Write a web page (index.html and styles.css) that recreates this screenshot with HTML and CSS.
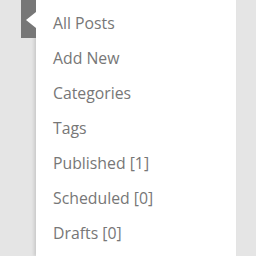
FILE: index.html
```html
<!DOCTYPE html>
<html>
<head>
<meta charset="utf-8">
<link rel="stylesheet" href="styles.css">
</head>
<body>
<div class="wrap">
  <div class="side">
    <div class="tab"><div class="notch"></div></div>
  </div>
  <ul class="menu">
    <li>All Posts</li>
    <li>Add New</li>
    <li>Categories</li>
    <li>Tags</li>
    <li>Published [1]</li>
    <li>Scheduled [0]</li>
    <li>Drafts [0]</li>
  </ul>
</div>
</body>
</html>
```
FILE: styles.css
```css
html, body {
  margin: 0;
  padding: 0;
  background: #e5e5e5;
  width: 256px;
  height: 256px;
  overflow: hidden;
}
.wrap {
  display: flex;
  height: 256px;
}
.side {
  width: 36px;
  flex: none;
  position: relative;
}
.tab {
  position: absolute;
  left: 21px;
  top: 0;
  width: 15px;
  height: 38px;
  background: #777777;
}
.notch {
  position: absolute;
  left: 5px;
  top: 12px;
  width: 0;
  height: 0;
  border-top: 8px solid transparent;
  border-bottom: 8px solid transparent;
  border-right: 10px solid #ffffff;
}
.menu {
  list-style: none;
  margin: 0;
  padding: 6px 0 0 17px;
  width: 183px;
  flex: none;
  background: #ffffff;
  box-shadow: -2px 0 3px rgba(0,0,0,0.12);
  font-family: "Open Sans", sans-serif;
  font-size: 15.8px;
  color: #777777;
}
.menu li {
  height: 35px;
  line-height: 35px;
  white-space: nowrap;
}
```
